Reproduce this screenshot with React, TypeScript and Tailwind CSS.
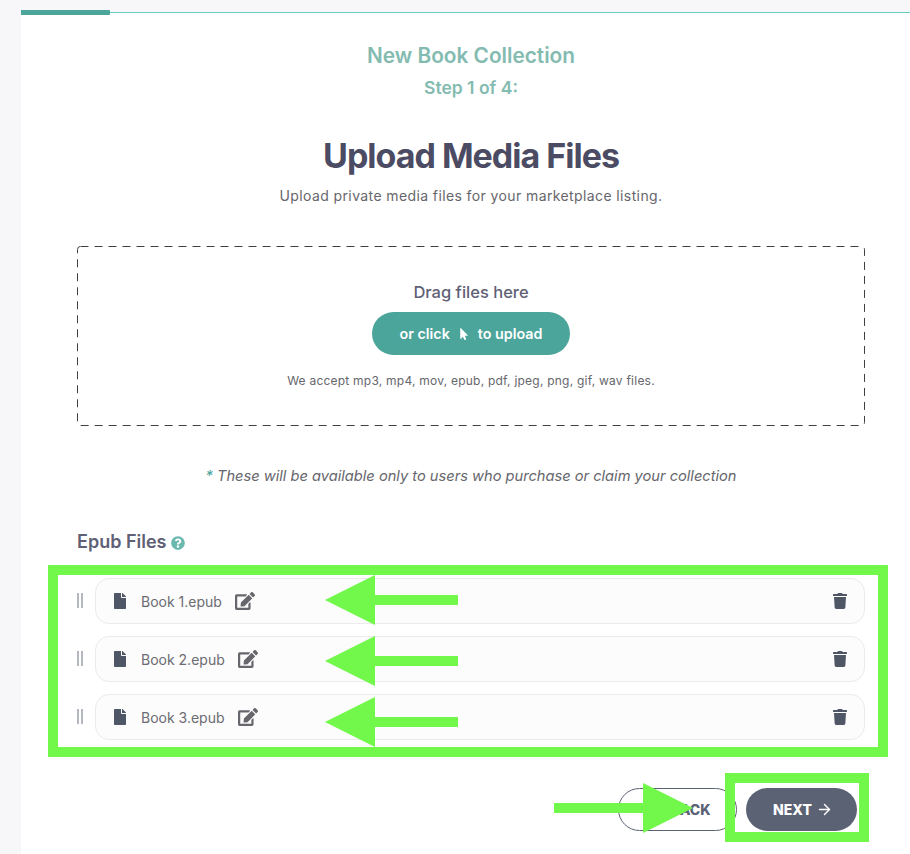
import React from "react";
import { FaFile, FaMousePointer, FaQuestionCircle, FaEdit, FaTrash } from "react-icons/fa";
import { ArrowRight } from "lucide-react";

const files = ["Book 1.epub", "Book 2.epub", "Book 3.epub"];
const arrowTops = [575, 636, 697];

const FileRow = ({ name }: { name: string }) => (
  <div className="flex items-center">
    <div className="mb-[2px] flex w-[18px] shrink-0 gap-[2px]">
      <span className="h-[15px] w-[2px] bg-[#b4b6c0]" />
      <span className="h-[15px] w-[2px] bg-[#b4b6c0]" />
    </div>
    <div className="flex h-[46px] flex-1 items-center rounded-[14px] border border-[#ebebed] bg-[#fcfcfc] pl-[16px] pr-[16px]">
      <FaFile className="text-[16px] text-[#4f5666]" />
      <span className="ml-[16px] -translate-x-[3px] text-[14px] text-[#6b6b72]">{name}</span>
      <FaEdit className="ml-[10px] text-[20px] text-[#66666c]" />
      <FaTrash className="ml-auto text-[16px] text-[#4f5666]" />
    </div>
  </div>
);

export default function App() {
  return (
    <div className="relative h-[854px] w-[910px] overflow-hidden bg-[#f7f7f9] pl-[21px] pt-[12px] font-['Inter',sans-serif]">
      <div className="relative h-[842px] w-[900px] bg-white px-[56px]">
        <div className="absolute left-0 right-0 top-0 h-[1px] bg-[#66cdc2]" />
        <div className="absolute left-0 top-[-2px] h-[5px] w-[89px] rounded-r-[1px] bg-[#4ba59a]" />

        <div className="pt-[31px] text-center font-semibold text-[#84bbb1]">
          <h2 className="text-[20.8px] leading-[26px]">New Book Collection</h2>
          <p className="mt-[8px] text-[17.5px] leading-[22px]">Step 1 of 4:</p>
        </div>

        <h1 className="mt-[35px] text-center text-[34px] font-bold leading-[44px] tracking-[-1px] text-[#4b4c63]">
          Upload Media Files
        </h1>
        <p className="mt-[8px] text-center text-[14px] leading-[20px] tracking-[0.39px] text-[#66666c]">
          Upload private media files for your marketplace listing.
        </p>

        <div className="relative mt-[40px] flex h-[180px] flex-col items-center pt-[35px]">
          <svg className="absolute left-0 top-0" width="788" height="180" viewBox="0 0 788 180">
            <rect x="0.5" y="0.5" width="787" height="179" rx="3" fill="none" stroke="#3f3f44" strokeDasharray="8 6" />
          </svg>
          <p className="text-[16.5px] font-medium leading-[22px] text-[#5f5f76]">Drag files here</p>
          <button className="mt-[9px] flex h-[43px] w-[198px] items-center justify-center rounded-full bg-[#4ba59a] text-[14.3px] font-semibold text-white">
            or click
            <FaMousePointer className="mx-[8px] text-[12px]" />
            to upload
          </button>
          <p className="mt-[18px] text-[12px] leading-[16px] tracking-[0.23px] text-[#66666c]">
            We accept mp3, mp4, mov, epub, pdf, jpeg, png, gif, wav files.
          </p>
        </div>

        <p className="mt-[40px] text-center text-[14.65px] italic leading-[20px] text-[#66666c]">
          <span className="text-[#4ba59a]">*</span> These will be available only to users who purchase or claim your collection
        </p>

        <div className="mt-[44px] flex items-center gap-[5px]">
          <h3 className="text-[18px] font-semibold leading-[24px] text-[#5f5f76]">Epub Files</h3>
          <FaQuestionCircle className="mt-[2px] text-[14px] text-[#6bb8af]" />
        </div>

        <div className="mt-[24px] flex flex-col gap-[12px]">
          {files.map((name) => (
            <FileRow key={name} name={name} />
          ))}
        </div>

        <div className="mt-[48px] flex justify-end gap-[9px] pr-[8px]">
          <button className="h-[43px] w-[119px] rounded-full border border-[#5b6274] bg-white pl-[26px] text-[14px] font-extrabold text-[#5b6274]">
            BACK
          </button>
          <button className="flex h-[43px] w-[111px] items-center justify-center gap-[4px] rounded-full bg-[#5b6274] pl-[3px] text-[14px] font-extrabold text-white">
            NEXT
            <ArrowRight size={17} strokeWidth={2} />
          </button>
        </div>
      </div>

      {/* green annotations drawn on top of the screenshot */}
      <div className="absolute left-[48px] top-[565px] h-[192px] w-[840px] border-[10px] border-[#72f74b]" />
      <div className="absolute left-[725px] top-[773px] h-[69px] w-[144px] border-[10px] border-[#72f74b]" />
      {arrowTops.map((top) => (
        <svg key={top} className="absolute left-[325px]" style={{ top }} width="133" height="50" viewBox="0 0 133 50">
          <path d="M0 25 L50 0 V20 H133 V30 H50 V50 Z" fill="#72f74b" />
        </svg>
      ))}
      <svg className="absolute left-[554px] top-[783px]" width="139" height="50" viewBox="0 0 139 50">
        <path d="M139 25 L89 0 V20 H0 V30 H89 V50 Z" fill="#72f74b" />
      </svg>
    </div>
  );
}
